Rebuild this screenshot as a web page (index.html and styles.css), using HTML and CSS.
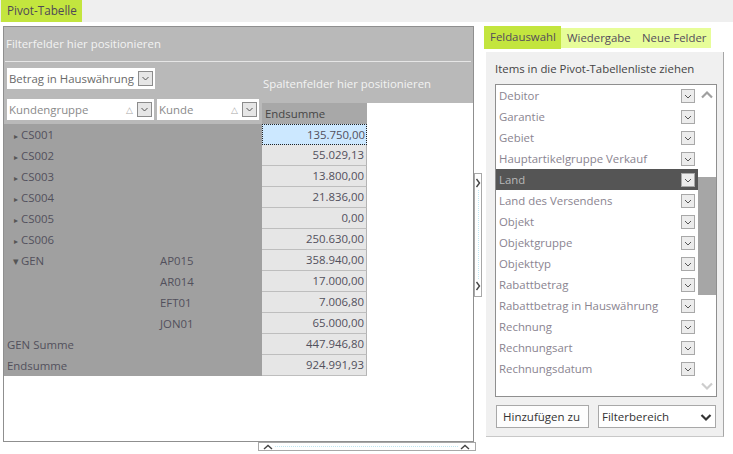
FILE: index.html
```html
<!DOCTYPE html>
<html lang="de">
<head>
<meta charset="utf-8">
<title>Pivot-Tabelle</title>
<link rel="stylesheet" href="styles.css">
</head>
<body>
<div class="topbar"><div class="tab-main">Pivot-Tabelle</div></div>
<div class="main">
  <div class="leftcol">
    <div class="pivot">
      <div class="filter"><div class="filter-text">Filterfelder hier positionieren</div></div>
      <div class="mid">
        <div class="rowzone">
          <div class="field field-data"><span class="flabel dark">Betrag in Hauswährung</span><span class="ddbtn"><svg width="13" height="13" viewBox="0 0 13 13"><path d="M3.5 5 L6.5 8 L9.5 5" fill="none" stroke="#555" stroke-width="1"/></svg></span></div>
          <div class="rowfields">
            <div class="field field-kg"><span class="flabel">Kundengruppe</span><span class="sort">&#9651;</span><span class="ddbtn"><svg width="13" height="13" viewBox="0 0 13 13"><path d="M3.5 5 L6.5 8 L9.5 5" fill="none" stroke="#555" stroke-width="1"/></svg></span></div>
            <div class="field field-k"><span class="flabel">Kunde</span><span class="sort">&#9651;</span><span class="ddbtn"><svg width="13" height="13" viewBox="0 0 13 13"><path d="M3.5 5 L6.5 8 L9.5 5" fill="none" stroke="#555" stroke-width="1"/></svg></span></div>
          </div>
        </div>
        <div class="colzone">
          <div class="colfields">Spaltenfelder hier positionieren</div>
          <div class="colhead"><div class="grand-head">Endsumme</div></div>
        </div>
      </div>
      <div class="body">
        <div class="rows">
          <div class="row"><span class="c1"><span class="tri">&#9656;</span>CS001</span></div>
          <div class="row"><span class="c1"><span class="tri">&#9656;</span>CS002</span></div>
          <div class="row"><span class="c1"><span class="tri">&#9656;</span>CS003</span></div>
          <div class="row"><span class="c1"><span class="tri">&#9656;</span>CS004</span></div>
          <div class="row"><span class="c1"><span class="tri">&#9656;</span>CS005</span></div>
          <div class="row"><span class="c1"><span class="tri">&#9656;</span>CS006</span></div>
          <div class="row"><span class="c1"><span class="tri down">&#9662;</span>GEN</span><span class="c2">AP015</span></div>
          <div class="row"><span class="c1"></span><span class="c2">AR014</span></div>
          <div class="row"><span class="c1"></span><span class="c2">EFT01</span></div>
          <div class="row"><span class="c1"></span><span class="c2">JON01</span></div>
          <div class="row"><span class="c1 total">GEN Summe</span></div>
          <div class="row"><span class="c1 total">Endsumme</span></div>
        </div>
        <div class="vals">
          <div class="val focus">135.750,00</div>
          <div class="val">55.029,13</div>
          <div class="val">13.800,00</div>
          <div class="val">21.836,00</div>
          <div class="val">0,00</div>
          <div class="val">250.630,00</div>
          <div class="val">358.940,00</div>
          <div class="val">17.000,00</div>
          <div class="val">7.006,80</div>
          <div class="val">65.000,00</div>
          <div class="val">447.946,80</div>
          <div class="val">924.991,93</div>
        </div>
      </div>
    </div>
    <div class="hsplit">
      <svg width="10" height="6" viewBox="0 0 10 6"><path d="M1 5 L5 1.5 L9 5" fill="none" stroke="#444" stroke-width="1.4"/></svg>
      <span class="dots-h"></span>
      <svg width="10" height="6" viewBox="0 0 10 6"><path d="M1 5 L5 1.5 L9 5" fill="none" stroke="#444" stroke-width="1.4"/></svg>
    </div>
  </div>
  <div class="vsplit">
    <svg width="6" height="10" viewBox="0 0 6 10"><path d="M1.5 1 L4.5 5 L1.5 9" fill="none" stroke="#444" stroke-width="1.4"/></svg>
    <span class="dots-v"></span>
    <svg width="6" height="10" viewBox="0 0 6 10"><path d="M1.5 1 L4.5 5 L1.5 9" fill="none" stroke="#444" stroke-width="1.4"/></svg>
  </div>
  <div class="rightcol">
    <div class="tabs">
      <div class="tab active">Feldauswahl</div>
      <div class="tab t-wg">Wiedergabe</div>
      <div class="tab t-nf">Neue Felder</div>
    </div>
    <div class="panel">
      <div class="panel-title">Items in die Pivot-Tabellenliste ziehen</div>
      <div class="list">
        <div class="items">
          <div class="item"><span>Debitor</span><span class="ddbox"><svg width="12" height="12" viewBox="0 0 12 12"><path d="M3 5 L6 8 L9 5" fill="none" stroke="#555" stroke-width="1"/></svg></span></div>
          <div class="item"><span>Garantie</span><span class="ddbox"><svg width="12" height="12" viewBox="0 0 12 12"><path d="M3 5 L6 8 L9 5" fill="none" stroke="#555" stroke-width="1"/></svg></span></div>
          <div class="item"><span>Gebiet</span><span class="ddbox"><svg width="12" height="12" viewBox="0 0 12 12"><path d="M3 5 L6 8 L9 5" fill="none" stroke="#555" stroke-width="1"/></svg></span></div>
          <div class="item"><span>Hauptartikelgruppe Verkauf</span><span class="ddbox"><svg width="12" height="12" viewBox="0 0 12 12"><path d="M3 5 L6 8 L9 5" fill="none" stroke="#555" stroke-width="1"/></svg></span></div>
          <div class="item sel"><span>Land</span><span class="ddbox"><svg width="12" height="12" viewBox="0 0 12 12"><path d="M3 5 L6 8 L9 5" fill="none" stroke="#555" stroke-width="1"/></svg></span></div>
          <div class="item"><span>Land des Versendens</span><span class="ddbox"><svg width="12" height="12" viewBox="0 0 12 12"><path d="M3 5 L6 8 L9 5" fill="none" stroke="#555" stroke-width="1"/></svg></span></div>
          <div class="item"><span>Objekt</span><span class="ddbox"><svg width="12" height="12" viewBox="0 0 12 12"><path d="M3 5 L6 8 L9 5" fill="none" stroke="#555" stroke-width="1"/></svg></span></div>
          <div class="item"><span>Objektgruppe</span><span class="ddbox"><svg width="12" height="12" viewBox="0 0 12 12"><path d="M3 5 L6 8 L9 5" fill="none" stroke="#555" stroke-width="1"/></svg></span></div>
          <div class="item"><span>Objekttyp</span><span class="ddbox"><svg width="12" height="12" viewBox="0 0 12 12"><path d="M3 5 L6 8 L9 5" fill="none" stroke="#555" stroke-width="1"/></svg></span></div>
          <div class="item"><span>Rabattbetrag</span><span class="ddbox"><svg width="12" height="12" viewBox="0 0 12 12"><path d="M3 5 L6 8 L9 5" fill="none" stroke="#555" stroke-width="1"/></svg></span></div>
          <div class="item"><span>Rabattbetrag in Hauswährung</span><span class="ddbox"><svg width="12" height="12" viewBox="0 0 12 12"><path d="M3 5 L6 8 L9 5" fill="none" stroke="#555" stroke-width="1"/></svg></span></div>
          <div class="item"><span>Rechnung</span><span class="ddbox"><svg width="12" height="12" viewBox="0 0 12 12"><path d="M3 5 L6 8 L9 5" fill="none" stroke="#555" stroke-width="1"/></svg></span></div>
          <div class="item"><span>Rechnungsart</span><span class="ddbox"><svg width="12" height="12" viewBox="0 0 12 12"><path d="M3 5 L6 8 L9 5" fill="none" stroke="#555" stroke-width="1"/></svg></span></div>
          <div class="item"><span>Rechnungsdatum</span><span class="ddbox"><svg width="12" height="12" viewBox="0 0 12 12"><path d="M3 5 L6 8 L9 5" fill="none" stroke="#555" stroke-width="1"/></svg></span></div>
        </div>
        <div class="scrollbar">
          <div class="sb-up"><svg width="14" height="10" viewBox="0 0 14 10"><path d="M2 7.5 L7 2.5 L12 7.5" fill="none" stroke="#a0a0a0" stroke-width="2.2"/></svg></div>
          <div class="sb-track"><div class="sb-thumb"></div></div>
          <div class="sb-down"><svg width="14" height="10" viewBox="0 0 14 10"><path d="M2 2.5 L7 7.5 L12 2.5" fill="none" stroke="#cdcdcd" stroke-width="2.2"/></svg></div>
        </div>
      </div>
      <div class="actions">
        <div class="btn">Hinzufügen zu</div>
        <div class="select"><span>Filterbereich</span><svg width="12" height="10" viewBox="0 0 12 10"><path d="M1.5 3 L6 7.5 L10.5 3" fill="none" stroke="#333" stroke-width="2.2"/></svg></div>
      </div>
    </div>
  </div>
</div>
</body>
</html>
```

FILE: styles.css
```css
* { box-sizing: border-box; }
html, body { margin: 0; padding: 0; }
body {
  width: 733px;
  height: 454px;
  overflow: hidden;
  background: #ffffff;
  font-family: "Open Sans", "Noto Sans", sans-serif;
  font-size: 11.4px;
  color: #555;
}

.topbar {
  height: 22px;
  background: #efefef;
  display: flex;
  padding-left: 1px;
}
.tab-main {
  background: #c3e53e;
  width: 81px;
  height: 22px;
  line-height: 21px;
  padding-left: 6px;
  color: #4f4858;
  font-size: 11.7px;
}

.main {
  display: flex;
  align-items: flex-start;
  padding-top: 4px;
  padding-left: 3px;
}

/* ---------- Pivot grid ---------- */
.leftcol { display: flex; flex-direction: column; width: 471px; }
.pivot {
  width: 471px;
  height: 416px;
  border: 1px solid #8f8f8f;
  display: flex;
  flex-direction: column;
  background: #fff;
}
.filter {
  height: 35px;
  background: #b9b9b9;
  padding: 0 2px 0 1px;
}
.filter-text {
  height: 35px;
  line-height: 33px;
  padding-left: 1px;
  color: #f3f3f3;
  border-bottom: 1px solid #e6e6e6;
}
.mid { display: flex; height: 62px; }
.rowzone {
  width: 258px;
  background: #b9b9b9;
  padding: 6px 0 4px 3px;
  display: flex;
  flex-direction: column;
  gap: 10px;
}
.field {
  height: 21px;
  background: #fff;
  display: flex;
  align-items: center;
  padding-left: 2px;
}
.field-data { width: 148px; }
.rowfields { display: flex; gap: 3px; }
.field-kg { width: 147px; }
.field-k { width: 102px; }
.flabel { flex: 1; color: #8a8a8a; white-space: nowrap; }
.flabel.dark { color: #6a6a6a; }
.sort { color: #aaa; font-size: 9px; margin-right: 4px; }
.ddbtn {
  width: 15px;
  height: 15px;
  border: 1px solid #8c8c8c;
  background: #e6e6e6;
  margin-right: 2px;
  display: flex;
  align-items: center;
  justify-content: center;
}
.colzone { flex: 1; display: flex; flex-direction: column; }
.colfields {
  height: 41px;
  background: #b9b9b9;
  color: #f3f3f3;
  padding: 14px 0 0 1px;
  line-height: 16px;
}
.colhead { height: 21px; display: flex; }
.grand-head {
  width: 105px;
  background: #a8a8a8;
  color: #464646;
  line-height: 21px;
  padding-left: 3px;
}
.body { display: flex; }
.rows { width: 258px; background: #a0a0a0; }
.row {
  height: 21px;
  line-height: 21px;
  display: flex;
  color: #52505c;
}
.c1 { width: 156px; padding-left: 9px; white-space: nowrap; }
.c1.total { padding-left: 3px; }
.c2 { padding-left: 0; }
.tri { display: inline-block; width: 8px; font-size: 8px; color: #555; padding-left: 1px; }
.tri.down { font-size: 11px; padding-left: 0; }
.vals { width: 105px; }
.val {
  height: 21px;
  line-height: 20px;
  background: #e6e6e6;
  border-right: 1px solid #b4b4b4;
  border-bottom: 1px solid #bebebe;
  text-align: right;
  padding-right: 2px;
  color: #52505c;
}
.val.focus {
  background: #cce8ff;
  border: 1px dotted #222;
  line-height: 19px;
  padding-right: 1px;
}

.hsplit {
  margin-left: 255px;
  width: 218px;
  height: 9px;
  border: 1px solid #a8a8a8;
  display: flex;
  align-items: center;
  padding: 0 5px 0 4px;
  gap: 2px;
}
.dots-h { flex: 1; border-top: 1px dotted #bfe6f2; }

.vsplit {
  margin-top: 147px;
  width: 8px;
  height: 124px;
  border: 1px solid #a8a8a8;
  display: flex;
  flex-direction: column;
  align-items: center;
  padding: 4px 0 5px;
  gap: 2px;
}
.dots-v { flex: 1; border-left: 1px dotted #bfe6f2; }

/* ---------- Right column ---------- */
.rightcol { margin-left: 2px; width: 240px; display: flex; flex-direction: column; }
.tabs { display: flex; align-items: center; height: 23px; }
.tab {
  height: 20px;
  line-height: 19px;
  background: #e7fd99;
  color: #534c5c;
  font-size: 11.4px;
  white-space: nowrap;
}
.tab.active { background: #c3e53e; height: 23px; line-height: 21px; width: 77px; padding-left: 6px; }
.t-wg { width: 75px; padding-left: 6px; }
.t-nf { width: 75px; padding-left: 6px; }

.panel {
  margin: 3px 0 0 2px;
  width: 238px;
  height: 385px;
  background: #f0f0f0;
  border-right: 1px solid #a6a6a6;
  border-bottom: 1px solid #c8c8c8;
  padding: 9px 0 0 9px;
}
.panel-title { height: 16px; line-height: 16px; color: #444; }
.list {
  margin-top: 7px;
  width: 222px;
  height: 313px;
  border: 1px solid #8f8f8f;
  background: #fff;
  display: flex;
}
.items { width: 202px; }
.item {
  height: 21px;
  display: flex;
  align-items: center;
  padding-left: 3px;
  color: #8a8490;
}
.item span:first-child { flex: 1; white-space: nowrap; }
.item.sel { background: #555555; color: #b8b8b8; }
.ddbox {
  width: 14px;
  height: 14px;
  border: 1px solid #a8a8a8;
  background: #ececec;
  margin-right: 3px;
  display: flex;
  align-items: center;
  justify-content: center;
}
.scrollbar { width: 18px; display: flex; flex-direction: column; }
.sb-up, .sb-down { height: 20px; display: flex; align-items: center; justify-content: center; }
.sb-track { flex: 1; padding-top: 72px; }
.sb-thumb { height: 118px; background: #a6a6a6; }

.actions { display: flex; gap: 9px; margin-top: 8px; padding-left: 1px; }
.btn {
  width: 93px;
  height: 23px;
  border: 1px solid #a8a8a8;
  background: #fdfdfd;
  line-height: 21px;
  padding-left: 6px;
  color: #333;
  font-size: 11.5px;
}
.select {
  width: 118px;
  height: 23px;
  border: 1px solid #a8a8a8;
  background: #fff;
  display: flex;
  align-items: center;
  justify-content: space-between;
  padding: 0 3px 0 3px;
  color: #333;
  font-size: 11.5px;
}
```
